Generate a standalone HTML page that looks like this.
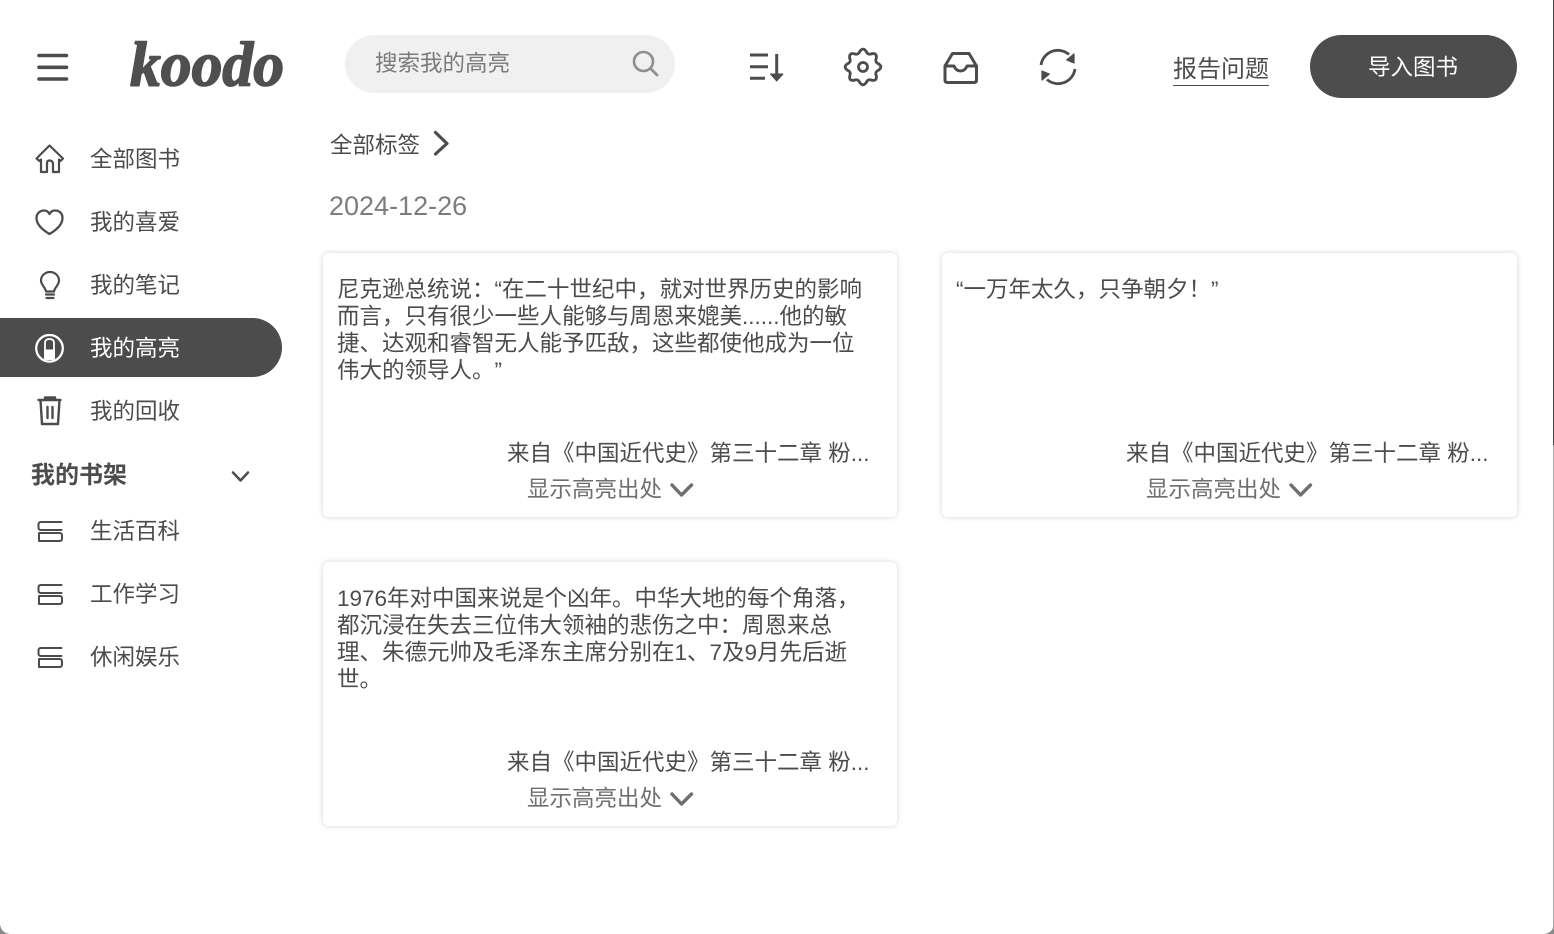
<!DOCTYPE html>
<html lang="zh-CN"><head><meta charset="utf-8"><title>Koodo</title>
<style>
html,body{margin:0;padding:0;background:#fff}
body{width:1554px;height:934px;position:relative;overflow:hidden;font-family:"Liberation Sans","Noto Sans CJK SC",sans-serif;color:#4c4c4c;font-size:22.5px;font-weight:400;text-spacing-trim:space-all}
.t{position:absolute;white-space:nowrap;line-height:30px;height:30px}
svg{position:absolute;overflow:visible;fill:none;stroke:#4c4c4c;stroke-width:2.2;stroke-linecap:round;stroke-linejoin:round}
.card{position:absolute;width:574px;height:264px;background:#fff;border-radius:6px;box-shadow:0 0 6px rgba(0,0,0,.17)}
.q{position:absolute;left:14px;top:22.5px;width:540px;line-height:27px;white-space:nowrap}
.f{position:absolute;left:184px;top:185.5px;line-height:30px;white-space:nowrap}
.s{position:absolute;left:204px;top:222px;line-height:30px;white-space:nowrap;color:#6f6f6f}
</style></head><body>
<div style="position:absolute;left:1553px;top:0;width:1px;height:445px;background:#444"></div>
<div style="position:absolute;left:1553px;top:445px;width:1px;height:489px;background:#aaa"></div>

<svg style="left:0;top:0" width="100" height="100"><path stroke-width="3.6" d="M39 55.5H66.5M39 67.3H66.5M39 79H66.5"/></svg>
<svg style="left:130px;top:30px" width="160" height="65"><text x="0" y="55.5" textLength="154" lengthAdjust="spacingAndGlyphs" style="font-family:'Liberation Serif',serif;font-weight:700;font-style:italic;font-size:63px;fill:#4f4f4f;stroke:#4f4f4f;stroke-width:1.6">koodo</text></svg>

<div style="position:absolute;left:345px;top:35px;width:330px;height:58px;border-radius:29px;background:#f0f0f0"></div>
<div class="t" style="left:375px;top:49px;color:#7b7b7b">搜索我的高亮</div>
<svg style="left:630px;top:48px" width="32" height="32"><circle cx="13.5" cy="13.5" r="9.5" stroke="#8f8f8f" stroke-width="2.6"/><path d="M20.5 20.5L27 27" stroke="#8f8f8f" stroke-width="2.8"/></svg>

<svg style="left:745px;top:48px" width="42" height="38"><path stroke-linecap="butt" stroke-width="3" d="M5 7H23M5 18.7H23M5 30.3H20M31.7 6V28"/><path d="M25.5 26H38L31.7 33Z" fill="#4c4c4c" stroke="#4c4c4c" stroke-width="1"/></svg>
<svg style="left:843px;top:47px" width="40" height="40"><g transform="translate(20 20)" stroke-width="2.8">
<path d="M-3.12 -15.69Q0 -20 3.12 -15.69Q4.78 -11.55 8.89 -13.3"/>
<path transform="rotate(45)" d="M-3.12 -15.69Q0 -20 3.12 -15.69Q4.78 -11.55 8.89 -13.3"/>
<path transform="rotate(90)" d="M-3.12 -15.69Q0 -20 3.12 -15.69Q4.78 -11.55 8.89 -13.3"/>
<path transform="rotate(135)" d="M-3.12 -15.69Q0 -20 3.12 -15.69Q4.78 -11.55 8.89 -13.3"/>
<path transform="rotate(180)" d="M-3.12 -15.69Q0 -20 3.12 -15.69Q4.78 -11.55 8.89 -13.3"/>
<path transform="rotate(225)" d="M-3.12 -15.69Q0 -20 3.12 -15.69Q4.78 -11.55 8.89 -13.3"/>
<path transform="rotate(270)" d="M-3.12 -15.69Q0 -20 3.12 -15.69Q4.78 -11.55 8.89 -13.3"/>
<path transform="rotate(315)" d="M-3.12 -15.69Q0 -20 3.12 -15.69Q4.78 -11.55 8.89 -13.3"/>
<circle cx="0" cy="0" r="4.5"/></g></svg>
<svg style="left:940px;top:49px" width="42" height="38"><path stroke-width="3" d="M5 17L12.5 4.5H29L36.5 17"/><path stroke-width="3" d="M5 17H14Q16 22 20.5 22T27 17H36.5V31Q36.5 33.5 34 33.5H7.5Q5 33.5 5 31Z"/></svg>
<svg style="left:1036px;top:46px" width="44" height="44"><path stroke-width="2.8" stroke-linecap="butt" d="M5 19A17 17 0 0 1 33 8.5M39 23A17 17 0 0 1 11 33.5"/><path d="M38 8V17L30.7 14Z" fill="#4c4c4c" stroke="#4c4c4c" stroke-width="1.2"/><path d="M6 34V25L13.3 28Z" fill="#4c4c4c" stroke="#4c4c4c" stroke-width="1.2"/></svg>

<div class="t" style="left:1173px;top:54px;font-size:24px;transform:translateY(1px)">报告问题</div>
<div style="position:absolute;left:1173px;top:84.5px;width:96px;height:1.5px;background:#4c4c4c"></div>
<div style="position:absolute;left:1310px;top:35px;width:207px;height:63px;border-radius:31.5px;background:#4d4d4d"></div>
<div class="t" style="left:1368px;top:52.5px;color:#fff">导入图书</div>

<div style="position:absolute;left:0;top:318px;width:282px;height:59px;background:#4c4c4c;border-radius:0 30px 30px 0"></div>
<div class="t" style="left:90px;top:145px">全部图书</div>
<div class="t" style="left:90px;top:208px">我的喜爱</div>
<div class="t" style="left:90px;top:271px">我的笔记</div>
<div class="t" style="left:90px;top:334px;color:#fff">我的高亮</div>
<div class="t" style="left:90px;top:397px">我的回收</div>
<div class="t" style="left:31px;top:461px;font-weight:700;font-size:24px">我的书架</div>
<div class="t" style="left:90px;top:517px">生活百科</div>
<div class="t" style="left:90px;top:580px">工作学习</div>
<div class="t" style="left:90px;top:643px">休闲娱乐</div>

<svg style="left:30px;top:139px" width="40" height="40"><path d="M19.5 6.5L6.5 19.5L9.5 22L11 20.5V33H17V24Q17 21.5 19.5 21.5T23 24V33H29V20.5L30.5 22L33 19.5Z"/></svg>
<svg style="left:30px;top:203px" width="40" height="40"><path stroke-width="2.3" d="M19.5 31C11 26 6.5 21 6.5 15C6.5 10.5 10 7.5 14 7.5C16.5 7.5 18.5 9 19.5 11C20.5 9 22.5 7.5 25 7.5C29.5 7.5 32.5 10.5 32.5 15C32.5 21 28 26 19.5 31Z"/></svg>
<svg style="left:30px;top:266px" width="40" height="40"><path d="M16 25.5C15.5 21.5 11 19 11 14.5A9 8.5 0 0 1 29 14.5C29 19 24.5 21.5 24 25.5ZM16 28.5H24M16.5 32H23.5"/></svg>
<svg style="left:30px;top:328px" width="40" height="40"><circle cx="19.5" cy="20.3" r="13.3" stroke="#fff" stroke-width="2.3"/><path d="M15 21V15Q15 11 19.5 11Q24 11 24 15V21" stroke="#fff" stroke-width="1.8"/><path d="M14 21.5H25V32H14Z" fill="#fff" stroke="none"/></svg>
<svg style="left:30px;top:391px" width="40" height="40"><path stroke-width="2.4" d="M8.5 9H30.5M15 9V6.5H25V9M10.5 9L12 33H28L29.5 9M17.5 16V27M22.5 16V27"/></svg>
<svg style="left:225px;top:462px" width="30" height="30"><path stroke-width="2.5" d="M8 10.5L15.5 18.5L23 10.5"/></svg>
<svg style="left:30px;top:511px" width="40" height="40"><path stroke-width="2" d="M31.5 11H11Q8.5 11 8.5 13.5V16.5Q8.5 19 11 19H31.5M9 22H29.5Q32 22 32 24.5V27.5Q32 30 29.5 30H9V22"/></svg>
<svg style="left:30px;top:574px" width="40" height="40"><path stroke-width="2" d="M31.5 11H11Q8.5 11 8.5 13.5V16.5Q8.5 19 11 19H31.5M9 22H29.5Q32 22 32 24.5V27.5Q32 30 29.5 30H9V22"/></svg>
<svg style="left:30px;top:637px" width="40" height="40"><path stroke-width="2" d="M31.5 11H11Q8.5 11 8.5 13.5V16.5Q8.5 19 11 19H31.5M9 22H29.5Q32 22 32 24.5V27.5Q32 30 29.5 30H9V22"/></svg>

<div class="t" style="left:330px;top:131px">全部标签</div>
<svg style="left:428px;top:128px" width="28" height="30"><path stroke-width="3.2" d="M7.5 4.5L19 15.5L7.5 26"/></svg>
<div class="t" style="left:329px;top:191px;font-size:27px;color:#7d7d7d">2024-12-26</div>

<div class="card" style="left:323px;top:253px">
<div class="q">尼克逊总统说&#xFF1A;“在二十世纪中&#xFF0C;就对世界历史的影响<br>而言&#xFF0C;只有很少一些人能够与周恩来媲美......他的敏<br>捷、达观和睿智无人能予匹敌&#xFF0C;这些都使他成为一位<br>伟大的领导人。”</div>
<div class="f">来自《中国近代史》第三十二章 粉...</div>
<div class="s">显示高亮出处</div>
<svg style="left:346px;top:228px" width="26" height="18"><path stroke="#6f6f6f" stroke-width="3.4" d="M3 4L12.5 14L22.5 4"/></svg>
</div>
<div class="card" style="left:942px;top:253px;width:575px">
<div class="q">“一万年太久&#xFF0C;只争朝夕&#xFF01;”</div>
<div class="f">来自《中国近代史》第三十二章 粉...</div>
<div class="s">显示高亮出处</div>
<svg style="left:346px;top:228px" width="26" height="18"><path stroke="#6f6f6f" stroke-width="3.4" d="M3 4L12.5 14L22.5 4"/></svg>
</div>
<div class="card" style="left:323px;top:562px">
<div class="q">1976年对中国来说是个凶年。中华大地的每个角落&#xFF0C;<br>都沉浸在失去三位伟大领袖的悲伤之中&#xFF1A;周恩来总<br>理、朱德元帅及毛泽东主席分别在1、7及9月先后逝<br>世。</div>
<div class="f">来自《中国近代史》第三十二章 粉...</div>
<div class="s">显示高亮出处</div>
<svg style="left:346px;top:228px" width="26" height="18"><path stroke="#6f6f6f" stroke-width="3.4" d="M3 4L12.5 14L22.5 4"/></svg>
</div>

<svg style="left:0;top:0" width="1554" height="934"><path stroke="none" fill="#8a8a8a" d="M0 924Q1 933 10 934H0ZM1554 924Q1553 933 1544 934H1554Z"/></svg>
</body></html>
